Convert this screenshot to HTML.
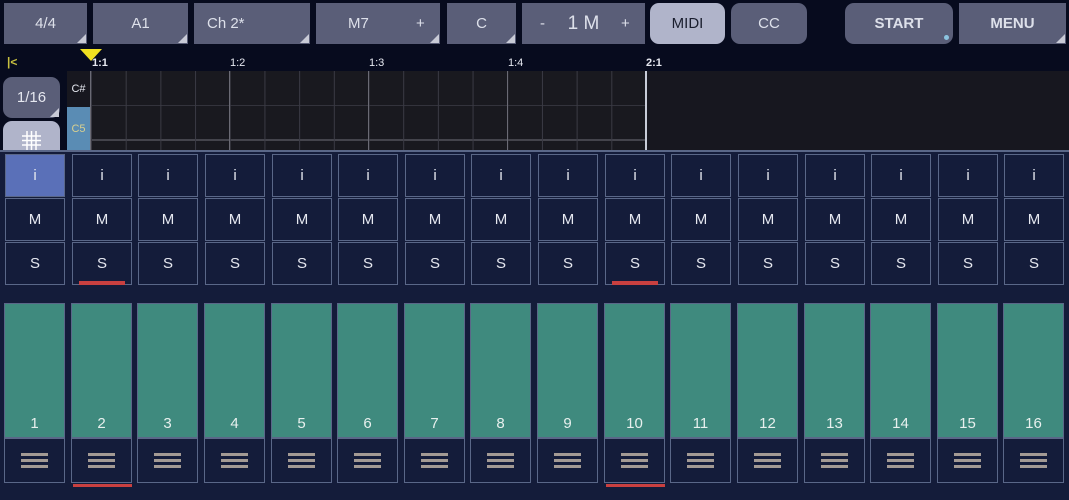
<!DOCTYPE html>
<html><head><style>
*{margin:0;padding:0;box-sizing:border-box}
body{width:1069px;height:500px;background:#070b1e;position:relative;overflow:hidden;font-family:"Liberation Sans",sans-serif;color:#e6e8f0}
.b{position:absolute;top:3px;height:41px;background:#5a5e78;color:#dde0ea;font-size:15px;display:flex;align-items:center;justify-content:center}
.tri:after{content:"";position:absolute;right:1px;bottom:1px;border-style:solid;border-width:0 0 9px 9px;border-color:transparent transparent #c8cad6 transparent}
.r{border-radius:9px}
.a{position:absolute}
.cell{position:absolute;width:60px;height:43px;border:1.5px solid #5a6788;background:#141c3a;display:flex;align-items:center;justify-content:center;font-size:15px;color:#e6e8f0}
.pad{position:absolute;width:61px;height:135px;top:303px;background:#3f8a7e;border:1.5px solid #5a6788;display:flex;align-items:flex-end;justify-content:center;padding-bottom:5px;font-size:15px;color:#e8f0ee}
.red{position:absolute;height:4px;background:#c94040}
.ham{width:27px;height:15px;border-top:3px solid #a39a94;border-bottom:3px solid #a39a94;position:relative}
.ham:after{content:"";position:absolute;left:0;right:0;top:3px;height:3px;background:#a39a94}
</style></head><body>
<div class="b tri" style="left:4px;width:83px">4/4</div>
<div class="b tri" style="left:93px;width:95px">A1</div>
<div class="b tri" style="left:194px;width:116px;justify-content:flex-start;padding-left:13px">Ch 2*</div>
<div class="b tri" style="left:316px;width:124px"><span style="position:absolute;left:32px">M7</span><span style="position:absolute;left:100px">+</span></div>
<div class="b tri" style="left:447px;width:69px">C</div>
<div class="b" style="left:522px;width:123px"><span style="position:absolute;left:18px">-</span><span style="font-size:19px">1 M</span><span style="position:absolute;left:99px">+</span></div>
<div class="b r" style="left:650px;width:75px;background:#b0b4ca;color:#1a1e2e">MIDI</div>
<div class="b r" style="left:731px;width:76px">CC</div>
<div class="b r" style="left:845px;width:108px;font-weight:bold">START<span style="position:absolute;right:4px;bottom:4px;width:5px;height:5px;border-radius:50%;background:#8cc4e0"></span></div>
<div class="b tri" style="left:959px;width:107px;font-weight:bold">MENU</div>

<div class="a" style="left:7px;top:55px;color:#c8c040;font-size:12px;font-weight:bold">|&lt;</div>
<div class="a" style="left:80px;top:49px;width:0;height:0;border-left:11px solid transparent;border-right:11px solid transparent;border-top:12px solid #f0e020"></div>
<div class="a" style="left:92px;top:57px;font-size:11px;font-weight:bold">1:1</div>
<div class="a" style="left:230px;top:57px;font-size:11px">1:2</div>
<div class="a" style="left:369px;top:57px;font-size:11px">1:3</div>
<div class="a" style="left:508px;top:57px;font-size:11px">1:4</div>
<div class="a" style="left:646px;top:57px;font-size:11px;font-weight:bold">2:1</div>

<div class="a" style="left:67px;top:71px;width:1002px;height:80px;background:#17171f"></div>
<div class="a" style="left:91px;top:71px;width:555px;height:80px;background:#19191f;
background-image:linear-gradient(to right,#3a3a44 1px,transparent 1px),linear-gradient(to bottom,transparent 34px,#33333c 34px,#33333c 35px,transparent 35px,transparent 68px,#44444c 68px,#44444c 70px,transparent 70px);background-size:34.7px 80px,555px 80px"></div>
<div class="a" style="left:229px;top:71px;width:1px;height:80px;background:#6a6a74"></div>
<div class="a" style="left:368px;top:71px;width:1px;height:80px;background:#6a6a74"></div>
<div class="a" style="left:507px;top:71px;width:1px;height:80px;background:#6a6a74"></div>
<div class="a" style="left:645px;top:71px;width:2px;height:80px;background:#c8ccd8"></div>
<div class="a" style="left:90px;top:71px;width:1px;height:80px;background:#6a6a74"></div>
<div class="a" style="left:67px;top:71px;width:23px;height:36px;background:#17171f;font-size:11px;display:flex;align-items:center;justify-content:center">C#</div>
<div class="a" style="left:67px;top:107px;width:23px;height:44px;background:#5a8cb4;color:#d8d090;font-size:11px;display:flex;align-items:center;justify-content:center">C5</div>
<div class="a tri" style="left:3px;top:77px;width:57px;height:41px;background:#5a5e78;border-radius:9px;display:flex;align-items:center;justify-content:center;font-size:15px">1/16</div>
<div class="a" style="left:3px;top:121px;width:57px;height:40px;background:#b0b4ca;border-radius:9px"></div>
<svg class="a" style="left:22px;top:131px" width="19" height="19" viewBox="0 0 19 19" stroke="#fff" stroke-width="1.5" fill="none"><path d="M5 0V19M9.5 0V19M14 0V19M0 5H19M0 9.5H19M0 14H19"/></svg>

<div class="a" style="left:0;top:150px;width:1069px;height:350px;background:#141c3a;border-top:2px solid #5a6788"></div>
<div id="cols"></div>
<script>
var h='';
for(var i=0;i<16;i++){var x=Math.round(5+i*66.63);
h+='<div class="cell" style="left:'+x+'px;top:154px;'+(i==0?'background:#5a70b8;':'')+'">i</div>';
h+='<div class="cell" style="left:'+x+'px;top:198px">M</div>';
h+='<div class="cell" style="left:'+x+'px;top:242px">S</div>';
h+='<div class="pad" style="left:'+(x-1)+'px">'+(i+1)+'</div>';
h+='<div class="cell" style="left:'+(x-1)+'px;top:438px;width:61px;height:45px"><div class="ham"></div></div>';
if(i==1||i==9){h+='<div class="red" style="left:'+(x+7)+'px;top:281px;width:46px"></div><div class="red" style="left:'+(x+1)+'px;top:484px;width:59px;height:3px"></div>';}
}
document.getElementById('cols').innerHTML=h;
</script>
</body></html>
